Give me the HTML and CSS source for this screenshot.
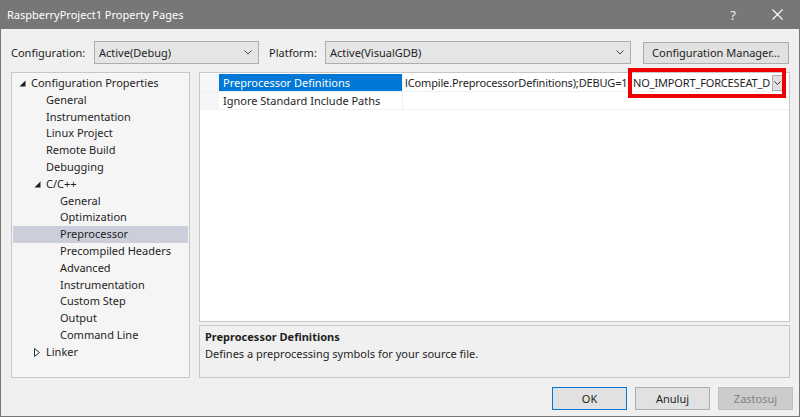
FILE: index.html
```html
<!DOCTYPE html>
<html lang="en">
<head>
    <meta charset="UTF-8">
    <title>RaspberryProject1 Property Pages</title>
    <link rel="stylesheet" href="styles.css">
</head>
<body>
<div class="window">
    <div class="titlebar">
        <span class="title">RaspberryProject1 Property Pages</span>
        <span class="help">?</span>
        <span class="close">
            <svg width="11" height="11" viewBox="0 0 11 11"><path d="M0.5 0.5 L10.5 10.5 M10.5 0.5 L0.5 10.5" stroke="#fff" stroke-width="1.1"/></svg>
        </span>
    </div>

    <div class="toolbar">
        <label class="lbl lbl-config">Configuration:</label>
        <div class="combo combo-config">
            <span>Active(Debug)</span>
            <svg class="chev" width="8" height="5" viewBox="0 0 8 5"><path d="M0.5 0.5 L4 4 L7.5 0.5" fill="none" stroke="#444" stroke-width="1"/></svg>
        </div>
        <label class="lbl lbl-platform">Platform:</label>
        <div class="combo combo-platform">
            <span>Active(VisualGDB)</span>
            <svg class="chev" width="8" height="5" viewBox="0 0 8 5"><path d="M0.5 0.5 L4 4 L7.5 0.5" fill="none" stroke="#444" stroke-width="1"/></svg>
        </div>
        <button class="btn btn-manager">Configuration Manager...</button>
    </div>

    <div class="main">
        <div class="tree">
            <div class="node lvl0"><span class="exp"><svg width="7" height="7" viewBox="0 0 7 7"><path d="M6.5 0.5 L6.5 6.5 L0.5 6.5 Z" fill="#1e1e1e"/></svg></span>Configuration Properties</div>
            <div class="node leaf1">General</div>
            <div class="node leaf1">Instrumentation</div>
            <div class="node leaf1">Linux Project</div>
            <div class="node leaf1">Remote Build</div>
            <div class="node leaf1">Debugging</div>
            <div class="node lvl1"><span class="exp"><svg width="7" height="7" viewBox="0 0 7 7"><path d="M6.5 0.5 L6.5 6.5 L0.5 6.5 Z" fill="#1e1e1e"/></svg></span>C/C++</div>
            <div class="node leaf2">General</div>
            <div class="node leaf2">Optimization</div>
            <div class="node leaf2 selected">Preprocessor</div>
            <div class="node leaf2">Precompiled Headers</div>
            <div class="node leaf2">Advanced</div>
            <div class="node leaf2">Instrumentation</div>
            <div class="node leaf2">Custom Step</div>
            <div class="node leaf2">Output</div>
            <div class="node leaf2">Command Line</div>
            <div class="node lvl1"><span class="exp"><svg width="6" height="9" viewBox="0 0 6 9"><path d="M0.5 0.5 L5.5 4.5 L0.5 8.5 Z" fill="none" stroke="#333" stroke-width="1"/></svg></span>Linker</div>
        </div>

        <div class="right">
            <div class="grid">
                <div class="row">
                    <div class="gutter"></div>
                    <div class="name active">Preprocessor Definitions</div>
                    <div class="value editing">
                        <span class="v1">lCompile.PreprocessorDefinitions);DEBUG=1</span>
                        <span class="v2">NO_IMPORT_FORCESEAT_D</span>
                        <span class="drop"><svg width="7" height="4" viewBox="0 0 7 4"><path d="M0.5 0.5 L3.5 3.5 L6.5 0.5" fill="none" stroke="#333" stroke-width="1"/></svg></span>
                    </div>
                </div>
                <div class="row">
                    <div class="gutter"></div>
                    <div class="name">Ignore Standard Include Paths</div>
                    <div class="value"></div>
                </div>
                <div class="highlight"></div>
            </div>
            <div class="desc">
                <div class="desc-title">Preprocessor Definitions</div>
                <div class="desc-text">Defines a preprocessing symbols for your source file.</div>
            </div>
        </div>
    </div>

    <div class="buttons">
        <button class="btn btn-ok">OK</button>
        <button class="btn btn-cancel">Anuluj</button>
        <button class="btn btn-apply" disabled>Zastosuj</button>
    </div>
</div>
</body>
</html>
```

FILE: styles.css
```css
body {
    margin: 0;
    font-family: "Noto Sans", "Open Sans", sans-serif;
    font-size: 11px;
    color: #1e1e1e;
}
.window {
    width: 800px;
    height: 417px;
    box-sizing: border-box;
    border: 1px solid #777777;
    border-top: none;
    background-color: #f0f0f0;
    display: flex;
    flex-direction: column;
}
.titlebar {
    height: 29px;
    background-color: #777777;
    color: #ffffff;
    display: flex;
    align-items: center;
    padding-left: 7px;
    margin: 0 -1px;
}
.title {
    flex: 1;
}
.help {
    font-size: 13px;
    margin-right: 36px;
    color: #f2f2f2;
}
.close {
    display: flex;
    margin-right: 17px;
}

/* top row */
.toolbar {
    display: flex;
    align-items: center;
    margin-top: 12px;
    padding-left: 10px;
    height: 23px;
}
.lbl {
    display: block;
}
.lbl-config {
    width: 83px;
}
.lbl-platform {
    width: 56px;
    margin-left: 10px;
}
.combo {
    height: 23px;
    box-sizing: border-box;
    border: 1px solid #adadad;
    background-color: #e5e5e5;
    display: flex;
    align-items: center;
    padding: 0 6px 0 4px;
}
.combo span {
    flex: 1;
}
.combo-config {
    width: 165px;
}
.combo-platform {
    width: 306px;
}
.btn {
    font-family: inherit;
    font-size: 11px;
    color: #1e1e1e;
    height: 22px;
    box-sizing: border-box;
    border: 1px solid #adadad;
    background-color: #e1e1e1;
    padding: 0;
}
.btn-manager {
    width: 146px;
    margin-left: 12px;
}

/* main area */
.main {
    display: flex;
    margin-top: 8px;
    padding-left: 10px;
    height: 306px;
}
.tree {
    width: 179px;
    box-sizing: border-box;
    border: 1px solid #c7c7c7;
    background-color: #f5f5f5;
    padding: 2px 1px 0 1px;
}
.node {
    height: 16.8px;
    line-height: 16.8px;
    white-space: nowrap;
    display: flex;
    align-items: center;
}
.exp {
    width: 12px;
    display: flex;
    align-items: center;
}
.lvl0 {
    padding-left: 6px;
}
.lvl1 {
    padding-left: 21px;
}
.leaf1 {
    padding-left: 33px;
}
.leaf2 {
    padding-left: 47px;
}
.selected {
    background-color: #cccedb;
}

.right {
    width: 591px;
    margin-left: 9px;
    display: flex;
    flex-direction: column;
    gap: 3px;
}
.grid {
    position: relative;
    flex: 1;
    box-sizing: border-box;
    border: 1px solid #c7c7c7;
    background-color: #ffffff;
    padding-top: 1px;
}
.row {
    display: flex;
    height: 17px;
    border-bottom: 1px solid #f0f0f0;
}
.gutter {
    width: 19px;
    background-color: #f4f6f9;
}
.name {
    width: 184px;
    padding-left: 4px;
    box-sizing: border-box;
    line-height: 17px;
    white-space: nowrap;
    border-right: 1px solid #f0f0f0;
}
.name.active {
    background-color: #0078d7;
    color: #ffffff;
}
.value {
    flex: 1;
    display: flex;
    align-items: center;
    padding-left: 2px;
    white-space: nowrap;
    overflow: hidden;
    letter-spacing: -0.15px;
}
.v1 {
    width: 222px;
}
.v2 {
    width: 138px;
    margin-left: 6px;
}
.drop {
    width: 11px;
    height: 16px;
    margin-left: 1px;
    box-sizing: border-box;
    border: 1px solid #adadad;
    background-color: #e1e1e1;
    display: flex;
    align-items: center;
    justify-content: center;
}
/* red annotation box drawn over the edited value */
.highlight {
    position: absolute;
    left: 428px;
    top: -5px;
    width: 158px;
    height: 30px;
    box-sizing: border-box;
    border: 4px solid #ee0000;
}
.desc {
    height: 53px;
    box-sizing: border-box;
    border: 1px solid #c7c7c7;
    background-color: #f0f0f0;
    padding: 2px 5px;
    line-height: 17px;
}
.desc-title {
    font-weight: bold;
}

/* bottom buttons */
.buttons {
    display: flex;
    justify-content: flex-end;
    gap: 8px;
    margin-top: 9px;
    padding-right: 6px;
}
.buttons .btn {
    width: 75px;
    height: 23px;
}
.btn-ok {
    border-color: #0078d7;
}
.btn-apply {
    background-color: #cccccc;
    border-color: #bfbfbf;
    color: #838383;
}
```
